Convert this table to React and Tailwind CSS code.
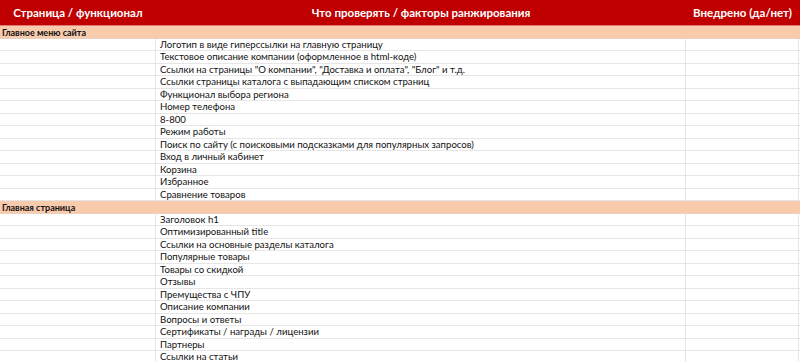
const menuRows = [
  'Логотип в виде гиперссылки на главную страницу',
  'Текстовое описание компании (оформленное в html-коде)',
  'Ссылки на страницы "О компании", "Доставка и оплата", "Блог" и т.д.',
  'Ссылки страницы каталога с выпадающим списком страниц',
  'Функционал выбора региона',
  'Номер телефона',
  '8-800',
  'Режим работы',
  'Поиск по сайту (с поисковыми подсказками для популярных запросов)',
  'Вход в личный кабинет',
  'Корзина',
  'Избранное',
  'Сравнение товаров',
];

const homeRows = [
  'Заголовок h1',
  'Оптимизированный title',
  'Ссылки на основные разделы каталога',
  'Популярные товары',
  'Товары со скидкой',
  'Отзывы',
  'Премущества с ЧПУ',
  'Описание компании',
  'Вопросы и ответы',
  'Сертификаты / награды / лицензии',
  'Партнеры',
  'Ссылки на статьи',
  '',
];

function Section({ title }) {
  return (
    <div className="h-[12.5px] bg-[#f8cbad] border-b border-[#ead0bd] pl-[2px] pt-[1px] flex items-center font-bold leading-none text-[9px]">
      {title}
    </div>
  );
}

function Row({ text }) {
  return (
    <div className="flex h-[12.5px] border-b border-[#e6e6e6] leading-none">
      <div className="w-[156px] shrink-0 border-r border-[#e6e6e6]" />
      <div className="w-[530px] shrink-0 border-r border-[#e6e6e6] pl-[4px] pt-[1px] flex items-center whitespace-nowrap">{text}</div>
      <div className="w-[113px] shrink-0 border-r border-[#e6e6e6]" />
    </div>
  );
}

export default function App() {
  return (
    <div className="w-[800px] h-[362px] overflow-hidden bg-white text-[9.6px] text-[#111]" style={{ fontFamily: 'Lato, "Noto Sans", sans-serif' }}>
      {/* шапка таблицы */}
      <div className="flex h-[26px] bg-[#c00000] border-b border-[#e07a7a] text-white font-bold text-[11.5px] whitespace-nowrap">
        <div className="w-[156px] flex items-center justify-center">Страница / функционал</div>
        <div className="w-[530px] flex items-center justify-center">Что проверять / факторы ранжирования</div>
        <div className="w-[113px] flex items-center justify-center">Внедрено (да/нет)</div>
      </div>

      <Section title="Главное меню сайта" />
      {menuRows.map((t, i) => <Row key={'m' + i} text={t} />)}

      <Section title="Главная страница" />
      {homeRows.map((t, i) => <Row key={'h' + i} text={t} />)}
    </div>
  );
}
